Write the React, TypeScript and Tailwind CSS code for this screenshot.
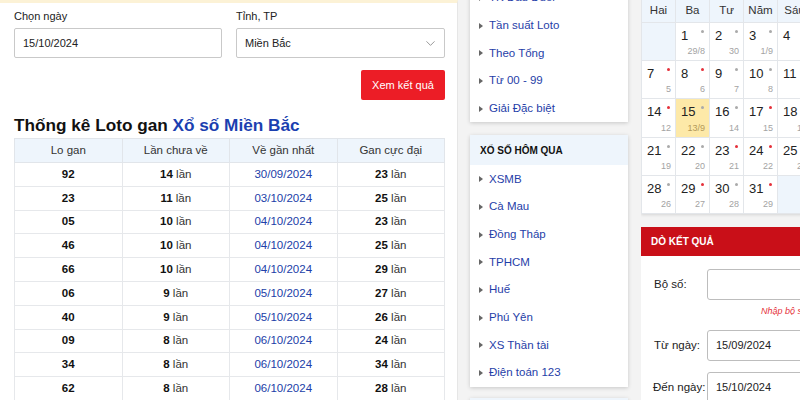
import { ChevronDown } from "lucide-react";

const rows = [
  { lo: "92", chua: "14", ve: "30/09/2024", max: "23" },
  { lo: "23", chua: "11", ve: "03/10/2024", max: "25" },
  { lo: "05", chua: "10", ve: "04/10/2024", max: "23" },
  { lo: "46", chua: "10", ve: "04/10/2024", max: "25" },
  { lo: "66", chua: "10", ve: "04/10/2024", max: "29" },
  { lo: "06", chua: "9", ve: "05/10/2024", max: "27" },
  { lo: "40", chua: "9", ve: "05/10/2024", max: "26" },
  { lo: "09", chua: "8", ve: "06/10/2024", max: "24" },
  { lo: "34", chua: "8", ve: "06/10/2024", max: "34" },
  { lo: "62", chua: "8", ve: "06/10/2024", max: "28" },
];

const thongKe = ["TK Đầu Đuôi", "Tần suất Loto", "Theo Tổng", "Từ 00 - 99", "Giải Đặc biệt"];
const homQua = ["XSMB", "Cà Mau", "Đồng Tháp", "TPHCM", "Huế", "Phú Yên", "XS Thần tài", "Điện toán 123"];

type Day = { d?: number; l?: string; dot?: "g" | "r"; today?: boolean };

const weekDays = ["Hai", "Ba", "Tư", "Năm", "Sáu", "Bảy", "CN"];
const weeks: Day[][] = [
  [{}, { d: 1, l: "29/8", dot: "g" }, { d: 2, l: "30", dot: "g" }, { d: 3, l: "1/9", dot: "g" }, { d: 4, l: "2" }, { d: 5, l: "3" }, { d: 6, l: "4" }],
  [{ d: 7, l: "5", dot: "r" }, { d: 8, l: "6", dot: "r" }, { d: 9, l: "7", dot: "g" }, { d: 10, l: "8", dot: "g" }, { d: 11, l: "9" }, { d: 12, l: "10" }, { d: 13, l: "11" }],
  [{ d: 14, l: "12", dot: "r" }, { d: 15, l: "13/9", dot: "g", today: true }, { d: 16, l: "14", dot: "g" }, { d: 17, l: "15", dot: "r" }, { d: 18, l: "16" }, { d: 19, l: "17" }, { d: 20, l: "18" }],
  [{ d: 21, l: "19", dot: "g" }, { d: 22, l: "20", dot: "g" }, { d: 23, l: "21", dot: "r" }, { d: 24, l: "22", dot: "r" }, { d: 25, l: "23" }, { d: 26, l: "24" }, { d: 27, l: "25" }],
  [{ d: 28, l: "26", dot: "g" }, { d: 29, l: "27", dot: "r" }, { d: 30, l: "28", dot: "g" }, { d: 31, l: "29", dot: "r" }, {}, {}, {}],
];

const LinkItem = ({ label }: { label: string }) => (
  <li className="flex h-[27.7px] items-center pl-[9px]">
    <span className="mr-[6px] h-0 w-0 border-y-[3px] border-l-[4px] border-y-transparent border-l-[#666]" />
    <span className="text-[11.5px] text-[#1f3ea8]">{label}</span>
  </li>
);

const CalCell = ({ day }: { day: Day }) => {
  if (!day.d) {
    return <div className="h-[38.2px] border-b border-r border-[#e3e6ea] bg-[#eef5fc]" />;
  }
  return (
    <div
      className={`relative h-[38.2px] border-b border-r border-[#e3e6ea] ${
        day.today ? "bg-[#fde9a8]" : "bg-white"
      }`}
    >
      <div className="pl-[5px] pt-[6px] text-[13px] leading-[14px] text-[#222]">{day.d}</div>
      {day.dot && (
        <span
          className={`absolute right-[5px] top-[7px] h-[3px] w-[3px] rounded-full ${
            day.dot === "r" ? "bg-[#e5303a]" : "bg-[#aaa]"
          }`}
        />
      )}
      <div
        className={`absolute bottom-[4px] right-[4px] text-[9px] leading-[10px] ${
          day.today ? "text-[#b49a5a]" : "text-[#a3a3a3]"
        }`}
      >
        {day.l}
      </div>
    </div>
  );
};

export default function App() {
  return (
    <div className="flex h-[400px] w-[800px] overflow-hidden bg-[#f3f3f3] font-['Liberation_Sans',Arial,sans-serif]">
      {/* Main panel */}
      <div className="w-[458px] shrink-0 border-r border-[#e6e6e6] border-t-[3px] border-t-[#fcf2d6] bg-white pl-[14px] pr-[12px] pt-[6px]">
        <div className="flex gap-[14px]">
          <div className="w-[208px]">
            <div className="mb-[5px] text-[11px] leading-[14px] text-[#222]">Chọn ngày</div>
            <div className="flex h-[30px] items-center rounded-[2px] border border-[#c9c9c9] pl-[8px] text-[11px] text-[#222]">
              15/10/2024
            </div>
          </div>
          <div className="w-[209px]">
            <div className="mb-[5px] text-[11px] leading-[14px] text-[#222]">Tỉnh, TP</div>
            <div className="flex h-[30px] items-center justify-between rounded-[2px] border border-[#c9c9c9] pl-[8px] pr-[6px] text-[11px] text-[#222]">
              Miền Bắc
              <ChevronDown size={15} strokeWidth={1.2} className="text-[#777]" />
            </div>
          </div>
        </div>
        <div className="mt-[12px] flex justify-end">
          <button className="h-[30px] w-[84px] rounded-[2px] bg-[#ec1d26] text-[11px] text-white">
            Xem kết quả
          </button>
        </div>
        <h1 className="mb-[3px] mt-[15px] text-[17.2px] font-bold leading-[20px] text-[#111]">
          Thống kê Loto gan <span className="text-[#1b3fb0]">Xổ số Miền Bắc</span>
        </h1>
        <table className="w-[431px] table-fixed border-collapse text-center text-[11.5px]">
          <thead>
            <tr className="bg-[#eef5fc]">
              {["Lo gan", "Lần chưa về", "Về gần nhất", "Gan cực đại"].map((h) => (
                <th key={h} className="h-[24px] border border-[#e1e5ea] p-0 font-normal text-[#333]">
                  {h}
                </th>
              ))}
            </tr>
          </thead>
          <tbody>
            {rows.map((r) => (
              <tr key={r.lo}>
                <td className="h-[23.8px] border border-[#e6e8eb] p-0 font-bold text-[#111]">{r.lo}</td>
                <td className="h-[23.8px] border border-[#e6e8eb] p-0 text-[#333]">
                  <b className="text-[#111]">{r.chua}</b> lần
                </td>
                <td className="h-[23.8px] border border-[#e6e8eb] p-0 text-[#2140a8]">{r.ve}</td>
                <td className="h-[23.8px] border border-[#e6e8eb] p-0 text-[#333]">
                  <b className="text-[#111]">{r.max}</b> lần
                </td>
              </tr>
            ))}
          </tbody>
        </table>
      </div>

      {/* Link sidebar */}
      <div className="ml-[12px] mt-[-16px] w-[158px] shrink-0">
        <ul className="bg-white shadow-[0_1px_4px_rgba(0,0,0,0.18)]">
          {thongKe.map((t) => (
            <LinkItem key={t} label={t} />
          ))}
        </ul>
        <div className="mt-[13px] bg-white shadow-[0_1px_4px_rgba(0,0,0,0.18)]">
          <div className="flex h-[30px] items-center bg-[#eef5fc] pl-[10px] text-[10px] font-bold text-[#111]">
            XỔ SỐ HÔM QUA
          </div>
          <ul>
            {homQua.map((t) => (
              <LinkItem key={t} label={t} />
            ))}
          </ul>
        </div>
        <div className="mt-[11px] h-[40px] bg-[#eef5fc] shadow-[0_1px_4px_rgba(0,0,0,0.18)]" />
      </div>

      {/* Right sidebar */}
      <div className="ml-[13px] w-[159px] shrink-0 overflow-hidden">
        <div className="w-[260px]">
          <div className="w-[239px] border-l border-[#e3e6ea] bg-white shadow-[0_1px_3px_rgba(0,0,0,0.12)]">
            <div className="grid grid-cols-[repeat(7,34px)]">
              {weekDays.map((w) => (
                <div
                  key={w}
                  className="flex h-[23px] items-center justify-center border-b border-r border-[#e3e6ea] bg-[#eef5fc] text-[11.5px] text-[#333]"
                >
                  {w}
                </div>
              ))}
              {weeks.flat().map((day, i) => (
                <CalCell key={i} day={day} />
              ))}
            </div>
          </div>

          <div className="mt-[13px] flex h-[29px] items-center bg-[#c90f18] pl-[10px] text-[10px] font-bold text-white">
            DÒ KẾT QUẢ
          </div>
          <div className="bg-white pl-[12px] pt-[13px] text-[11.5px] text-[#222]">
            <div className="flex items-center">
              <span className="w-[54px] shrink-0 pl-[1px]">Bộ số:</span>
              <div className="h-[31px] w-[190px] rounded-[3px] border border-[#bdbdbd]" />
            </div>
            <div className="mt-[5px] pl-[108px] text-[9px] italic leading-[12px] text-[#e5303a]">
              Nhập bộ số cần dò
            </div>
            <div className="mt-[13px] flex items-center">
              <span className="w-[54px] shrink-0 pl-[1px]">Từ ngày:</span>
              <div className="flex h-[31px] w-[190px] items-center rounded-[3px] border border-[#bdbdbd] pl-[8px] text-[11px]">
                15/09/2024
              </div>
            </div>
            <div className="mt-[11px] flex items-center">
              <span className="w-[54px] shrink-0 whitespace-nowrap">Đến ngày:</span>
              <div className="flex h-[31px] w-[190px] items-center rounded-[3px] border border-[#bdbdbd] pl-[8px] text-[11px]">
                15/10/2024
              </div>
            </div>
          </div>
        </div>
      </div>
    </div>
  );
}
